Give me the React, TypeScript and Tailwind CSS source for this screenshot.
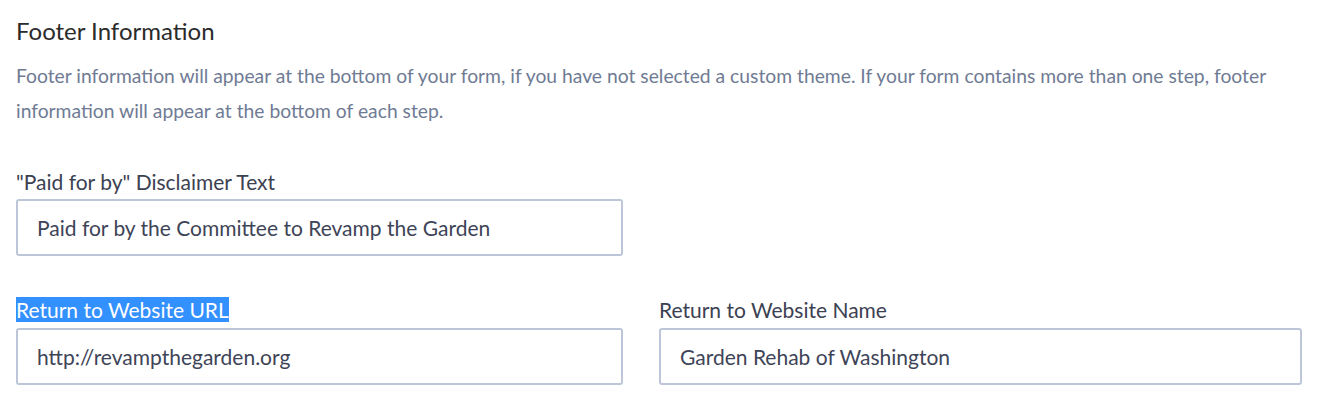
export default function App() {
  return (
    <div className="w-[1320px] h-[407px] bg-white pl-4 pt-[16px] font-['Lato','Noto_Sans',sans-serif]">
      <h2 className="text-[24px] leading-[30px] text-[#2b2b2b]">Footer Information</h2>
      <p className="mt-[12px] w-[1290px] text-[19.3px] leading-[35px] text-[#6f7b94]">
        Footer information will appear at the bottom of your form, if you have not selected a custom theme. If your form contains more than one step, footer information will appear at the bottom of each step.
      </p>

      <div className="mt-[42px]">
        <label className="block text-[21px] leading-[24px] text-[#3c4152]">"Paid for by" Disclaimer Text</label>
        <div className="mt-[5px] w-[607px] h-[57px] border-2 border-[#bcc6d8] rounded-[3px] flex items-center pl-[19px] text-[21px] text-[#3e4457]">
          Paid for by the Committee to Revamp the Garden
        </div>
      </div>

      <div className="mt-[42px] flex gap-[36px]">
        <div className="w-[607px]">
          <label className="block text-[21px] leading-[24px] text-[#3c4152]">
            <span className="bg-[#3390ff] text-white">Return to Website URL</span>
          </label>
          <div className="mt-[6px] h-[57px] border-2 border-[#bcc6d8] rounded-[3px] flex items-center pl-[19px] text-[21px] text-[#3e4457]">
            http://revampthegarden.org
          </div>
        </div>
        <div className="w-[643px]">
          <label className="block text-[21px] leading-[24px] text-[#3c4152]">Return to Website Name</label>
          <div className="mt-[6px] h-[57px] border-2 border-[#bcc6d8] rounded-[3px] flex items-center pl-[19px] text-[21px] text-[#3e4457]">
            Garden Rehab of Washington
          </div>
        </div>
      </div>
    </div>
  );
}
